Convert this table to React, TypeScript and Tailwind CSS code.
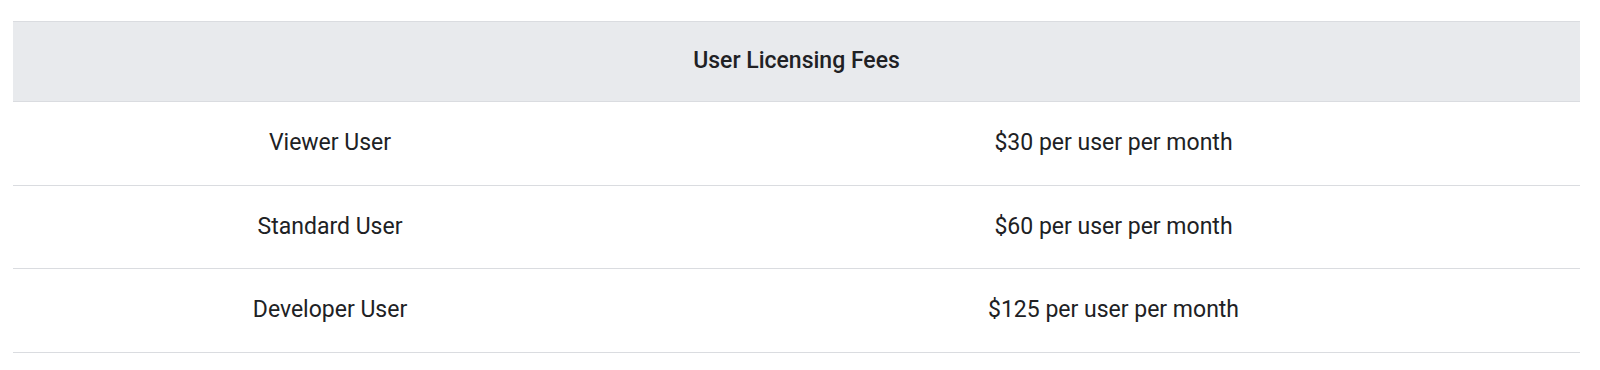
const rows = [
  { name: 'Viewer User', price: '$30 per user per month' },
  { name: 'Standard User', price: '$60 per user per month' },
  { name: 'Developer User', price: '$125 per user per month' },
];

export default function App() {
  return (
    <div className="min-h-screen bg-white pt-[21px] pl-[13px] font-['Roboto',sans-serif] text-[23px] text-[#202124]">
      <div className="w-[1567px]">
        {/* Header */}
        <div className="flex h-[81px] items-center justify-center border-y border-[#dadce0] bg-[#e8eaed] font-medium">
          User Licensing Fees
        </div>

        {/* Rows */}
        {rows.map((row) => (
          <div
            key={row.name}
            className="grid h-[83.5px] grid-cols-[634px_1fr] items-center border-b border-[#dadce0] text-center"
          >
            <div>{row.name}</div>
            <div>{row.price}</div>
          </div>
        ))}
      </div>
    </div>
  );
}
